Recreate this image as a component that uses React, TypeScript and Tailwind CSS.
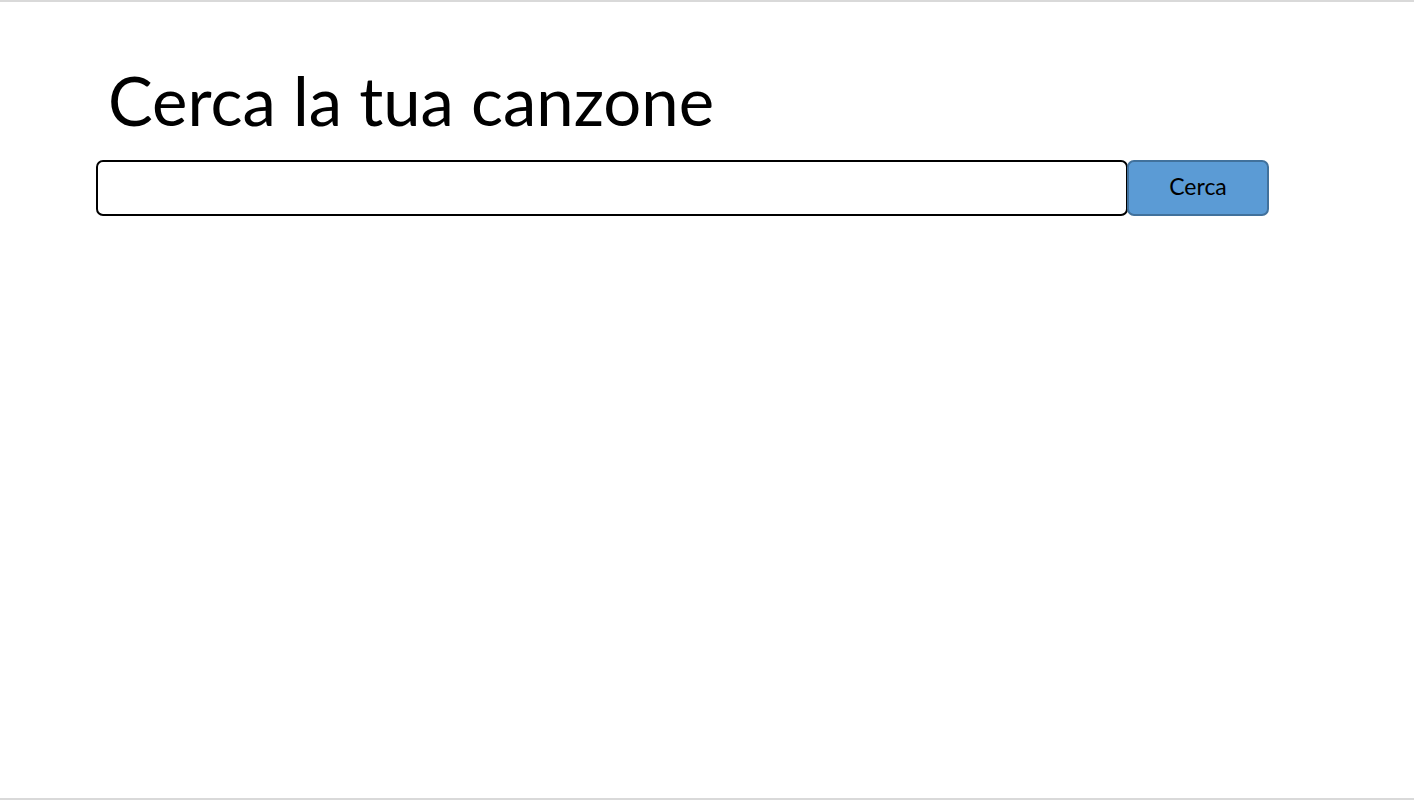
export default function App() {
  return (
    <div className="min-h-screen bg-white flex flex-col" style={{ fontFamily: "Lato, 'Open Sans', sans-serif" }}>
      <div className="h-[2px] bg-[#d9d9d9]" />
      <main className="flex-1 pl-[96px] pt-[60px]">
        <h1 className="pl-[12px] text-[67px] leading-[76px] text-black font-normal">
          Cerca la tua canzone
        </h1>
        <div className="mt-[22px] flex items-stretch h-[56px]">
          <input
            type="text"
            className="w-[1032px] h-full border-2 border-black rounded-[7px] bg-white px-3 outline-none"
          />
          <button className="-ml-[1px] w-[142px] h-full pb-[3px] bg-[#5b9bd5] border-2 border-[#41719c] rounded-[7px] text-[23px] text-black">
            Cerca
          </button>
        </div>
      </main>
      <div className="h-[2px] bg-[#d9d9d9]" />
    </div>
  );
}
